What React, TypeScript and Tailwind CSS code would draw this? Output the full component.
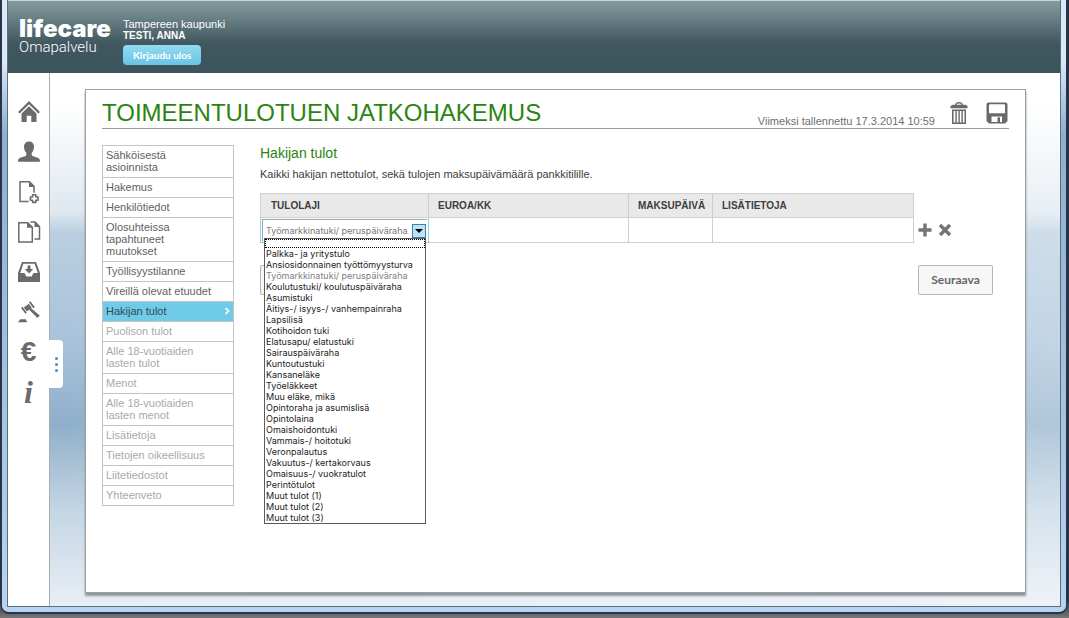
import type { ReactNode } from "react";
import { clsx } from "clsx";

const steps = [
  { label: "Sähköisestä asioinnista", state: "done", wrap: true },
  { label: "Hakemus", state: "done" },
  { label: "Henkilötiedot", state: "done" },
  { label: "Olosuhteissa tapahtuneet muutokset", state: "done", wrap: true },
  { label: "Työllisyystilanne", state: "done" },
  { label: "Vireillä olevat etuudet", state: "done" },
  { label: "Hakijan tulot", state: "active" },
  { label: "Puolison tulot", state: "pending" },
  { label: "Alle 18-vuotiaiden lasten tulot", state: "pending", wrap: true },
  { label: "Menot", state: "pending" },
  { label: "Alle 18-vuotiaiden lasten menot", state: "pending", wrap: true },
  { label: "Lisätietoja", state: "pending" },
  { label: "Tietojen oikeellisuus", state: "pending" },
  { label: "Liitetiedostot", state: "pending" },
  { label: "Yhteenveto", state: "pending" },
];

const incomeTypes = [
  "Palkka- ja yritystulo",
  "Ansiosidonnainen työttömyysturva",
  "Työmarkkinatuki/ peruspäiväraha",
  "Koulutustuki/ koulutuspäiväraha",
  "Asumistuki",
  "Äitiys-/ isyys-/ vanhempainraha",
  "Lapsilisä",
  "Kotihoidon tuki",
  "Elatusapu/ elatustuki",
  "Sairauspäiväraha",
  "Kuntoutustuki",
  "Kansaneläke",
  "Työeläkkeet",
  "Muu eläke, mikä",
  "Opintoraha ja asumislisä",
  "Opintolaina",
  "Omaishoidontuki",
  "Vammais-/ hoitotuki",
  "Veronpalautus",
  "Vakuutus-/ kertakorvaus",
  "Omaisuus-/ vuokratulot",
  "Perintötulot",
  "Muut tulot (1)",
  "Muut tulot (2)",
  "Muut tulot (3)",
];

const selectedIncome = "Työmarkkinatuki/ peruspäiväraha";

function Icon({ children }: { children: ReactNode }) {
  return (
    <svg viewBox="0 0 24 24" className="size-6" fill="currentColor" aria-hidden="true">
      {children}
    </svg>
  );
}

const railItems = [
  {
    label: "Etusivu",
    icon: (
      <Icon>
        <path d="M12 1 1 12l1.6 1.6L12 4.3l9.4 9.3L23 12Z" />
        <path d="M12 6.2 4.5 13.6V22h5.2v-6.2h4.6V22h5.2v-8.4Z" />
      </Icon>
    ),
  },
  {
    label: "Omat tiedot",
    icon: (
      <Icon>
        <path d="M12 1.500c3.200 0 5 2 5 5.200 0 2.700-1 4.700-2.300 6v2c0 .8.5 1.200 1.500 1.500l4.400 1.500c1.700.6 2.400 1.500 2.400 4.100H1c0-2.600.7-3.500 2.400-4.100l4.400-1.500c1-.3 1.500-.7 1.500-1.500v-2C8 11.400 7 9.400 7 6.700c0-3.200 1.800-5.200 5-5.200Z" />
      </Icon>
    ),
  },
  {
    label: "Uusi hakemus",
    icon: (
      <Icon>
        <path
          d="M11.500 21.500h-8.500V1.800h9.500l4.500 4.500v6.500"
          fill="none"
          stroke="currentColor"
          strokeWidth="1.500"
        />
        <path d="M12 1.500v5.500h5.500Z" />
        <path
          d="M15.600 14.800h3.200v2.200H21v3.200h-2.200v2.200h-3.200v-2.200h-2.200V17h2.200Z"
          fill="none"
          stroke="currentColor"
          strokeWidth="1.600"
          strokeLinejoin="round"
        />
      </Icon>
    ),
  },
  {
    label: "Hakemukset",
    icon: (
      <Icon>
        <path
          d="M1.800 2.800h9l4.500 4.500V22H1.800ZM13.500 2h4.500l4.500 4.500V19H17.500"
          fill="none"
          stroke="currentColor"
          strokeWidth="1.500"
        />
        <path d="M10 2.500v5.300h5.300ZM17.500 1.500v5.500H23Z" />
      </Icon>
    ),
  },
  {
    label: "Saapuneet",
    icon: (
      <Icon>
        <path
          fillRule="evenodd"
          d="M5 2h14l4 11v9H1v-9Zm1.400 1.800L3.200 13h4.300l1.800 3.500h5.400l1.800-3.500h4.300l-3.200-9.200Z"
        />
        <path d="M10.500 5.500h3V9h2.700L12 13.500 7.800 9h2.700Z" />
      </Icon>
    ),
  },
  {
    label: "Päätökset",
    icon: (
      <Icon>
        <g stroke="currentColor" fill="none">
          <path d="m8.300 9.400 5-3.700" strokeWidth="5" />
          <path d="m12.700 1.800 4.300 5.800M4.800 7.400l4.300 5.800" strokeWidth="1.800" />
        </g>
        <path d="m12 9.400 1.500-1.700 9.300 7.700-2.400 2.700ZM3.200 19.200h5.600l1.500 3H1Z" />
      </Icon>
    ),
  },
  {
    label: "Maksut",
    icon: <span className="font-['Liberation_Sans',sans-serif] text-[28px] leading-6 font-bold">€</span>,
  },
  {
    label: "Tietoa",
    icon: <span className="font-['Liberation_Serif',serif] text-[32px] leading-6 font-bold italic">i</span>,
  },
];

function TopBar() {
  return (
    <header className="flex h-[73px] items-start border-t border-[#c3d6d3] bg-linear-to-b from-[#859c9f] via-[#40575f] via-60% to-[#3c545c] pt-4 pl-[11px] text-white">
      <div className="w-[104px]">
        <div className="font-[Inter,sans-serif] text-2xl leading-6 font-black">lifecare</div>
        <div className="font-[Roboto,sans-serif] text-[15px] leading-3 font-light">Omapalvelu</div>
      </div>
      <div className="flex flex-col items-start">
        <span className="text-[11px] leading-[14px]">Tampereen kaupunki</span>
        <span className="text-[10px] leading-[10px] font-bold">TESTI, ANNA</span>
        <button
          type="button"
          className="mt-1 h-5 rounded bg-linear-to-b from-[#93daf0] to-[#69c4e6] px-[10px] font-[Lato,sans-serif] text-[10px] font-bold"
        >
          Kirjaudu ulos
        </button>
      </div>
    </header>
  );
}

function IconRail() {
  return (
    <nav className="relative flex w-[42px] shrink-0 flex-col items-center gap-4 border-r border-[#a9adb1] bg-white pt-[27px] text-[#6b6b6b]">
      {railItems.map((item) => (
        <a
          key={item.label}
          href="#"
          aria-label={item.label}
          className="flex size-6 items-center justify-center"
        >
          {item.icon}
        </a>
      ))}
      {/* Handle that opens the rail */}
      <button
        type="button"
        aria-label="Avaa valikko"
        className="absolute top-[267px] -right-[14px] flex h-12 w-[14px] flex-col items-center justify-center gap-[3px] rounded-r-sm bg-white"
      >
        <span className="size-[3px] rounded-full bg-[#4a8cc4]" />
        <span className="size-[3px] rounded-full bg-[#4a8cc4]" />
        <span className="size-[3px] rounded-full bg-[#4a8cc4]" />
      </button>
    </nav>
  );
}

function StepList() {
  return (
    <nav className="w-[132px] shrink-0">
      <ul className="border-t border-[#c4c4c4]">
        {steps.map((step) => (
          <li key={step.label} className="border-x border-b border-[#c4c4c4]">
            <a
              href="#"
              className={clsx(
                "flex items-center justify-between px-[3px] pt-[3px] pb-1 text-[11px] leading-3",
                step.state === "done" && "text-[#5f5f5f]",
                step.state === "active" && "bg-[#70cbe9] text-[#2f4a55]",
                step.state === "pending" && "text-[#a9a9a9]",
              )}
            >
              <span className={clsx(step.wrap && "w-24")}>{step.label}</span>
              {step.state === "active" && (
                <svg viewBox="0 0 6 8" className="h-2 w-1.5" aria-hidden="true">
                  <path d="m1.500 1 3 3-3 3" fill="none" stroke="white" strokeWidth="1.600" />
                </svg>
              )}
            </a>
          </li>
        ))}
      </ul>
    </nav>
  );
}

function IncomeSelect() {
  return (
    <>
      <div className="flex h-[22px] items-center border-t border-l border-[#9aa5ab] pr-px">
        <select
          aria-label="Tulolaji"
          defaultValue={selectedIncome}
          className="h-5 min-w-0 flex-1 appearance-none bg-white pl-[3px] font-[Inter,sans-serif] text-[9px] text-[#777]"
        >
          <option value="" />
          {incomeTypes.map((type) => (
            <option key={type}>{type}</option>
          ))}
        </select>
        <span className="flex size-[14px] shrink-0 items-center justify-center border border-[#3c7fb1] bg-[#bfe3f6]">
          <svg viewBox="0 0 8 4" className="h-1 w-2" aria-hidden="true">
            <path d="M0 0h8L4 4Z" fill="black" />
          </svg>
        </span>
      </div>
      <ul
        role="listbox"
        aria-label="Tulolaji"
        className="absolute top-5 left-[3px] z-10 w-[162px] border border-[#5a5a5a] bg-white font-[Inter,sans-serif] text-[9px] leading-[11px] text-[#1c1c1c]"
      >
        <li role="option" aria-selected="false" className="h-[9px] border border-dotted border-black" />
        {incomeTypes.map((type) => (
          <li
            key={type}
            role="option"
            aria-selected={type === selectedIncome}
            className={clsx("pl-px whitespace-nowrap", type === selectedIncome && "text-[#808080]")}
          >
            {type}
          </li>
        ))}
      </ul>
    </>
  );
}

function IncomeTable() {
  return (
    <div className="mt-3 flex items-end">
      <div className="min-w-0 flex-1">
        <table className="w-full table-fixed border-collapse text-left text-[10px] text-[#3d3d3d]">
          <colgroup>
            <col className="w-[168px]" />
            <col />
            <col className="w-[84px]" />
            <col className="w-[201px]" />
          </colgroup>
          <thead>
            <tr className="h-6 bg-[#e9e9e9]">
              <th className="border border-[#cfcfcf] pl-[10px]">TULOLAJI</th>
              <th className="border border-[#cfcfcf] pl-[9px]">EUROA/KK</th>
              <th className="border border-[#cfcfcf] pl-[9px]">MAKSUPÄIVÄ</th>
              <th className="border border-[#cfcfcf] pl-[9px]">LISÄTIETOJA</th>
            </tr>
          </thead>
          <tbody>
            <tr className="h-6">
              <td className="relative border border-[#8fd0ea] p-px">
                <IncomeSelect />
              </td>
              <td className="border border-[#cfcfcf]" />
              <td className="border border-[#cfcfcf]" />
              <td className="border border-[#cfcfcf]" />
            </tr>
          </tbody>
        </table>
      </div>
      <div className="flex w-[95px] shrink-0 gap-[6px] pb-[6px] pl-1 text-[#747474]">
        <button type="button" aria-label="Lisää rivi">
          <svg viewBox="0 0 14 14" className="size-[14px]" aria-hidden="true">
            <path d="M7 .5v13M.5 7h13" stroke="currentColor" strokeWidth="3.400" />
          </svg>
        </button>
        <button type="button" aria-label="Poista rivi">
          <svg viewBox="0 0 14 14" className="size-[14px]" aria-hidden="true">
            <path d="m2 2 10 10M12 2 2 12" stroke="currentColor" strokeWidth="3.400" />
          </svg>
        </button>
      </div>
    </div>
  );
}

function PageHeader() {
  return (
    <div className="flex h-[39px] items-end border-b border-[#9b9b9b]">
      <h1 className="mb-[3px] flex-1 text-2xl leading-6 text-[#2c8410]">
        TOIMEENTULOTUEN JATKOHAKEMUS
      </h1>
      <span className="text-[11px] leading-[13px] text-[#6f6f6f]">
        Viimeksi tallennettu 17.3.2014 10:59
      </span>
      <div className="mb-[3px] ml-3 flex gap-[14px] text-[#696969]">
        <button type="button" aria-label="Poista">
          <Icon>
            <path
              d="M9 4C9 2.200 9.500 1.800 12 1.800s3 .4 3 2.200"
              fill="none"
              stroke="currentColor"
              strokeWidth="1.600"
            />
            <path d="M5.500 3.800h13l2 1.200v2.200h-17V5Z" />
            <path
              fillRule="evenodd"
              d="M5 8.500h14V23H5Zm1.600 1.500v11.500h1.800V10Zm3.200 0v11.500h1.600V10Zm3 0v11.500h1.600V10Zm3 0v11.500h1.700V10Z"
            />
          </Icon>
        </button>
        <button type="button" aria-label="Tallenna">
          <Icon>
            <path
              fillRule="evenodd"
              d="M3.500 1.500h17A2 2 0 0 1 22.500 3.500V20l-2.500 2.500H4L1.500 20V3.500A2 2 0 0 1 3.500 1.500ZM5 3.200a1 1 0 0 0-1 1v8h16v-8a1 1 0 0 0-1-1ZM6.500 15.500v5.500h10.500v-5.500Z"
            />
            <path d="M12.500 16.300h2.500v4.700h-2.500z" />
          </Icon>
        </button>
      </div>
    </div>
  );
}

export default function App() {
  return (
    <div className="flex min-h-screen bg-linear-to-b from-[#2a3140] from-97% to-[#767676] pr-[2px] pb-1 pl-px font-['Liberation_Sans',Arial,sans-serif]">
      {/* Browser window frame */}
      <div className="flex flex-1 rounded-b-lg border-x border-b-2 border-[#27364c] bg-linear-to-b from-[#dbe8f8] from-10% via-[#8faed0] via-22% to-[#b9d3f0] px-[5px] pb-[5px]">
        <div className="flex min-w-0 flex-1 flex-col border-x border-b border-[#54717c]">
          <TopBar />
          <div className="flex flex-1 bg-[linear-gradient(to_bottom,#ffffff_6%,#dfe8f0_26%,#b9cfe1_30%,#a9c3db_50%,#8fafca_66%,#c4d6e4_82%,#e8eef5_100%)]">
            <IconRail />
            <div className="flex min-w-0 flex-1 bg-linear-to-r from-transparent to-white/30 pt-4 pr-[34px] pb-[13px] pl-[35px]">
              <main className="min-w-0 flex-1 border border-[#9a9fa2] bg-white pr-4 pl-4 shadow-[0_3px_2px_#8f9699]">
                <PageHeader />
                <div className="flex gap-[26px] pt-4">
                  <StepList />
                  <section className="min-w-0 flex-1">
                    <h2 className="text-sm leading-4 text-[#2c8410]">Hakijan tulot</h2>
                    <p className="mt-1.5 text-[11px] leading-[14px] text-[#3d3d3d]">
                      Kaikki hakijan nettotulot, sekä tulojen maksupäivämäärä pankkitilille.
                    </p>
                    <IncomeTable />
                    <div className="mt-[22px] flex justify-between pr-4">
                      <button
                        type="button"
                        aria-label="Edellinen"
                        className="h-[30px] w-[75px] rounded-xs border border-[#b5b5b5] bg-[#f7f7f7]"
                      />
                      <button
                        type="button"
                        className="h-[30px] w-[75px] rounded-xs border border-[#b5b5b5] bg-[#f7f7f7] font-[Lato,sans-serif] text-xs font-bold text-[#666]"
                      >
                        Seuraava
                      </button>
                    </div>
                  </section>
                </div>
              </main>
            </div>
          </div>
        </div>
      </div>
    </div>
  );
}
